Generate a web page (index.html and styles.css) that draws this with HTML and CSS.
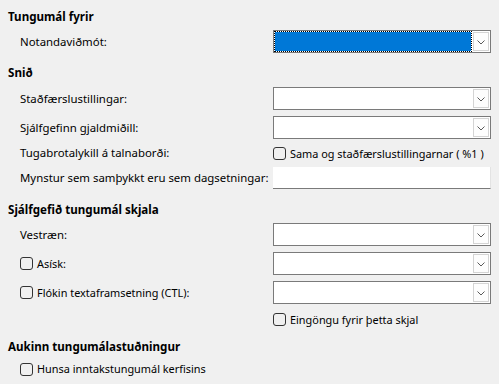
FILE: index.html
```html
<!DOCTYPE html>
<html lang="is">
<head>
<meta charset="utf-8">
<title>Tungumál</title>
<link rel="stylesheet" href="styles.css">
</head>
<body>
<div class="page">
  <div class="heading h1">Tungumál fyrir</div>
  <div class="grid g1">
    <div class="label">Notandaviðmót:</div>
    <div class="combo"><div class="field focused"><div class="fill"></div></div><div class="btn"><svg viewBox="0 0 8 5" width="8" height="5"><path d="M0.5 0.5 L4 4 L7.5 0.5" fill="none" stroke="#5a5a5a" stroke-width="1"/></svg></div></div>
  </div>

  <div class="heading h2">Snið</div>
  <div class="grid g2">
    <div class="label">Staðfærslustillingar:</div>
    <div class="combo"><div class="field"></div><div class="btn"><svg viewBox="0 0 8 5" width="8" height="5"><path d="M0.5 0.5 L4 4 L7.5 0.5" fill="none" stroke="#5a5a5a" stroke-width="1"/></svg></div></div>
    <div class="label">Sjálfgefinn gjaldmiðill:</div>
    <div class="combo"><div class="field"></div><div class="btn"><svg viewBox="0 0 8 5" width="8" height="5"><path d="M0.5 0.5 L4 4 L7.5 0.5" fill="none" stroke="#5a5a5a" stroke-width="1"/></svg></div></div>
    <div class="label">Tugabrotalykill á talnaborði:</div>
    <label class="check"><span class="box"></span><span class="ctext">Sama og staðfærslustillingarnar ( %1 )</span></label>
    <div class="label">Mynstur sem samþykkt eru sem dagsetningar:</div>
    <div class="entry"></div>
  </div>

  <div class="heading h3">Sjálfgefið tungumál skjala</div>
  <div class="grid g3">
    <div class="label">Vestræn:</div>
    <div class="combo"><div class="field"></div><div class="btn"><svg viewBox="0 0 8 5" width="8" height="5"><path d="M0.5 0.5 L4 4 L7.5 0.5" fill="none" stroke="#5a5a5a" stroke-width="1"/></svg></div></div>
    <label class="label check"><span class="box"></span><span class="ctext">Asísk:</span></label>
    <div class="combo"><div class="field"></div><div class="btn"><svg viewBox="0 0 8 5" width="8" height="5"><path d="M0.5 0.5 L4 4 L7.5 0.5" fill="none" stroke="#5a5a5a" stroke-width="1"/></svg></div></div>
    <label class="label check"><span class="box"></span><span class="ctext">Flókin textaframsetning (CTL):</span></label>
    <div class="combo"><div class="field"></div><div class="btn"><svg viewBox="0 0 8 5" width="8" height="5"><path d="M0.5 0.5 L4 4 L7.5 0.5" fill="none" stroke="#5a5a5a" stroke-width="1"/></svg></div></div>
    <div class="label"></div>
    <label class="check"><span class="box"></span><span class="ctext">Eingöngu fyrir þetta skjal</span></label>
  </div>

  <div class="heading h4">Aukinn tungumálastuðningur</div>
  <div class="grid g4">
    <label class="label check"><span class="box"></span><span class="ctext">Hunsa inntakstungumál kerfisins</span></label>
  </div>
</div>
</body>
</html>
```
FILE: styles.css
```css
html, body {
  margin: 0;
  padding: 0;
  background: #f0f0f0;
}
body {
  width: 499px;
  height: 384px;
  overflow: hidden;
  font-family: "Noto Sans", "Open Sans", sans-serif;
  font-size: 11.4px;
  color: #000;
}
.page {
  padding: 9px 0 0 8px;
}
.heading {
  font-weight: bold;
  font-size: 11.6px;
  height: 16px;
  line-height: 16px;
}
.h1 { margin-bottom: 5px; }
.h2 { margin-top: 12px; margin-bottom: 6px; }
.h3 { margin-top: 13px; margin-bottom: 5px; }
.h4 { margin-top: 12px; margin-bottom: 6px; }

.grid {
  display: grid;
  grid-template-columns: 265px 218px;
  row-gap: 6px;
  align-items: center;
}
.label {
  padding-left: 12px;
  white-space: nowrap;
  line-height: 16px;
}
.combo {
  height: 23px;
  box-sizing: border-box;
  border: 1px solid #7a7a7a;
  background: #fff;
  display: flex;
}
.field {
  flex: 1;
  box-sizing: border-box;
}
.field.focused {
  padding: 1px;
  border: 1px dotted #000;
  background: #fff;
  margin: 0 1px 0 0;
}
.fill {
  background: #0078d7;
  margin: -1px;
  height: calc(100% + 2px);
}
.btn {
  width: 16px;
  box-sizing: border-box;
  margin: 1px 1px 1px 0;
  border: 1px solid #d4d4d4;
  background: #fdfdfd;
  display: flex;
  align-items: center;
  justify-content: center;
}
.btn svg { display: block; margin-top: 1px; }
.entry {
  height: 22px;
  box-sizing: border-box;
  background: #fff;
  border-bottom: 1px solid #7a7a7a;
  border-right: 1px solid #e3e3e3;
}
.check {
  display: flex;
  align-items: center;
  gap: 4px;
  height: 16px;
  white-space: nowrap;
}
.ctext {
  font-size: 10.9px;
}
.box {
  width: 13px;
  height: 13px;
  box-sizing: border-box;
  border: 1px solid #333;
  border-radius: 3px;
  flex: none;
}
.g3 .check.label { height: 23px; }
.g3 > .check:last-child { margin-top: 1px; }
```
